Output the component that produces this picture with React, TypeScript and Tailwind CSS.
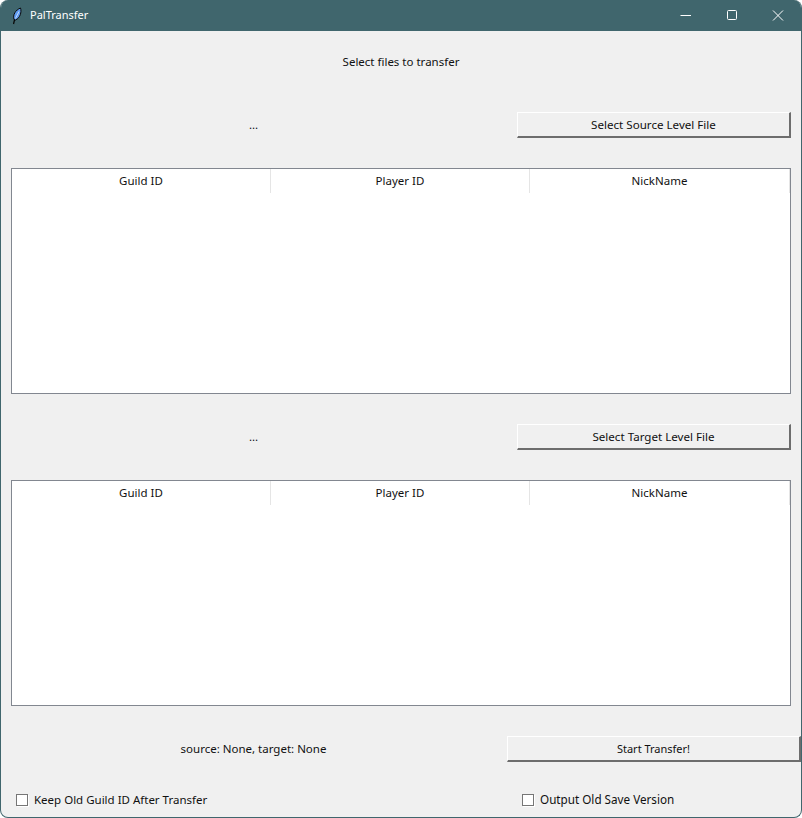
const font = { fontFamily: '"Noto Sans", sans-serif' };

function Btn({ label, className }: { label: string; className: string }) {
  return (
    <button className={`h-[26px] bg-[#f0f0f0] border-t border-l border-white border-r-2 border-b-2 border-r-[#6d6d6d] border-b-[#6d6d6d] leading-none text-[#111111] ${className}`}>
      {label}
    </button>
  );
}

function Table() {
  const cols = ['Guild ID', 'Player ID', 'NickName'];
  return (
    <div className="mx-[10px] h-[226px] bg-white border border-[#828790]">
      <div className="flex h-[24px] text-[11.5px] text-[#111111]">
        <div className="w-[259px] pb-px border-r border-[#e5e5e5] flex items-center justify-center">{cols[0]}</div>
        <div className="w-[259px] pb-px border-r border-[#e5e5e5] flex items-center justify-center">{cols[1]}</div>
        <div className="w-[260px] pb-px border-r border-[#e5e5e5] flex items-center justify-center">{cols[2]}</div>
      </div>
    </div>
  );
}

function Check({ label, className, textClass }: { label: string; className: string; textClass: string }) {
  return (
    <div className={`flex items-center gap-[6px] ${className}`}>
      <span className="w-[12px] h-[12px] border border-[#767676] bg-white shadow-[1px_1px_0_#ffffff]" />
      <span className={`pb-px text-[#111111] ${textClass}`}>{label}</span>
    </div>
  );
}

export default function App() {
  return (
    <div className="w-[802px] h-[818px] bg-white">
      <div style={font} className="w-full h-full rounded-[8px] overflow-hidden bg-[#f0f0f0] border border-t-0 border-[#40666d] flex flex-col">
        <div className="h-[31px] -mx-px shrink-0 bg-[#40666d] flex items-center text-white">
          <svg className="ml-[12px] w-[10px] h-[18px]" viewBox="0 0 10 18">
            <path d="M1.5 17 L3 11" stroke="#0a0a0a" strokeWidth="1.3" fill="none" />
            <path d="M2 12.5 C0.5 8 3.5 3 8.5 1 C9.8 5 8.2 11 3.5 13 Z" fill="#5f9bf0" stroke="#0a0a0a" strokeWidth="1" />
            <path d="M3.5 11.5 L7 4.5" stroke="#dbe8fb" strokeWidth="0.8" fill="none" />
          </svg>
          <span className="ml-[8px] text-[11px]">PalTransfer</span>
          <div className="ml-auto flex items-center mr-px">
            <svg className="w-[46px] h-[31px]" viewBox="0 0 46 31"><path d="M17.5 15.5 H28" stroke="#fff" /></svg>
            <svg className="w-[46px] h-[31px]" viewBox="0 0 46 31"><rect x="18.5" y="10.5" width="9" height="9" rx="1" stroke="#fff" fill="none" /></svg>
            <svg className="w-[46px] h-[31px]" viewBox="0 0 46 31"><path d="M18 10.5 L28 20.5 M28 10.5 L18 20.5" stroke="#fff" /></svg>
          </div>
        </div>

        <div className="h-[61px] flex items-center justify-center text-[11.5px] text-[#111111]">Select files to transfer</div>

        <div className="h-[76px] flex items-start">
          <div className="w-[505px] pt-[24px] text-center text-[11.5px] text-[#111111]">...</div>
          <Btn label="Select Source Level File" className="w-[274px] ml-[11px] mt-[20px] text-[11.6px]" />
        </div>

        <Table />

        <div className="h-[86px] flex items-start">
          <div className="w-[505px] pt-[34px] text-center text-[11.5px] text-[#111111]">...</div>
          <Btn label="Select Target Level File" className="w-[274px] ml-[11px] mt-[30px] text-[11.6px]" />
        </div>

        <Table />

        <div className="h-[56px] flex items-start">
          <div className="w-[505px] pt-[34px] text-center text-[11.5px] text-[#111111]">source: None, target: None</div>
          <Btn label="Start Transfer!" className="w-[294px] ml-[1px] mt-[30px] text-[11px]" />
        </div>

        <div className="flex mt-[29px]">
          <Check label="Keep Old Guild ID After Transfer" className="ml-[15px] w-[506px]" textClass="text-[11.5px]" />
          <Check label="Output Old Save Version" className="" textClass="text-[11.7px]" />
        </div>
      </div>
    </div>
  );
}
